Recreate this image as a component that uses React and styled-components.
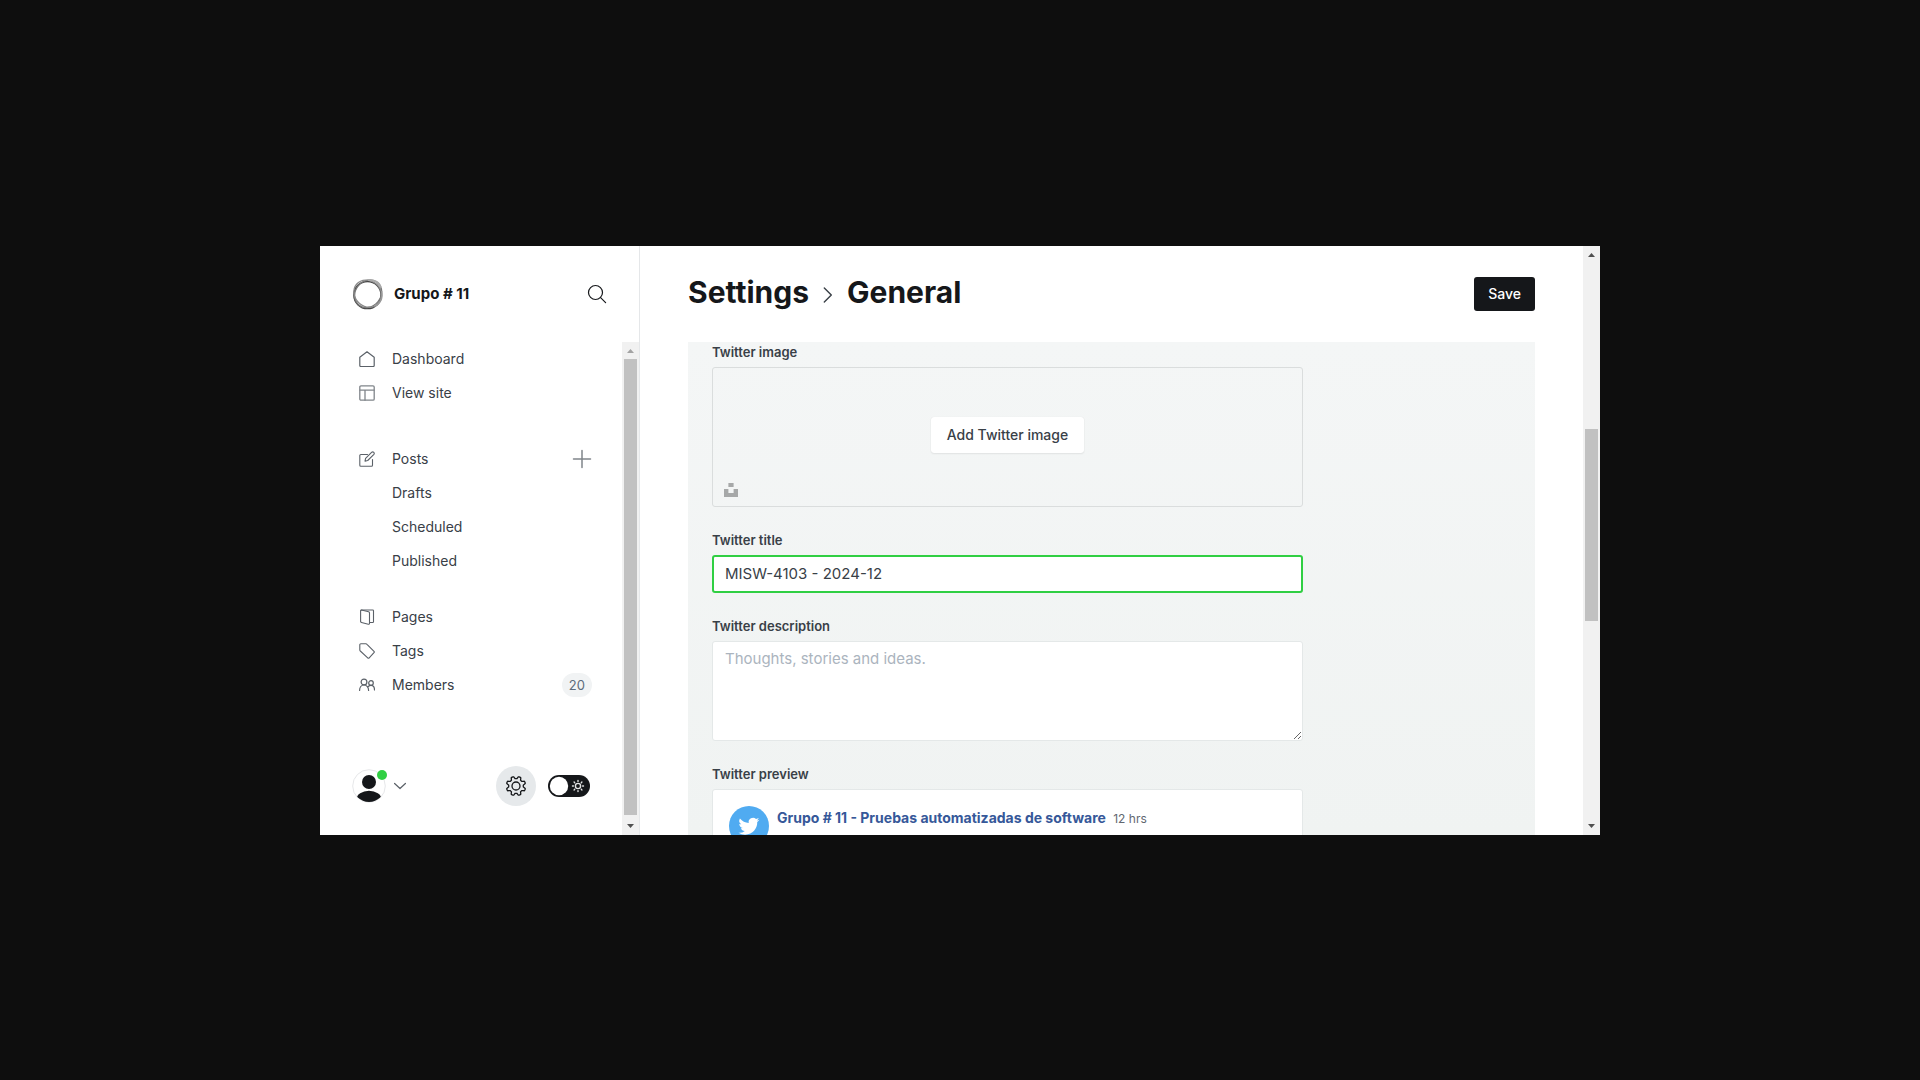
import React from "react";
import styled, { createGlobalStyle, css } from "styled-components";

const GlobalStyle = createGlobalStyle`
  *, *::before, *::after { box-sizing: border-box; }
  body {
    margin: 0;
    background: #0e0e0e;
    font-family: Inter, "Liberation Sans", sans-serif;
    color: #394047;
  }
  button, input, textarea { font: inherit; color: inherit; }
  a { color: inherit; text-decoration: none; }
`;

const Stage = styled.div`
  display: grid;
  grid-template-columns: 1fr 4fr 1fr;
  min-height: 100vh;
  padding: 246px 0 245px;
`;

const AppWindow = styled.div`
  grid-column: 2;
  display: flex;
  height: calc(100vh - 491px);
  min-height: 480px;
  overflow: hidden;
  background: #fff;
`;

const Sidebar = styled.aside`
  display: flex;
  flex-direction: column;
  flex: 0 0 320px;
  border-right: 1px solid #e5e7e9;
`;

const SiteHeader = styled.div`
  display: flex;
  align-items: center;
  gap: 10px;
  height: 96px;
  padding: 0 32px;
`;

const SiteName = styled.div`
  flex: 1;
  font-size: 15px;
  font-weight: 700;
  line-height: 20px;
  color: #15171a;
`;

const IconButton = styled.button`
  display: flex;
  align-items: center;
  justify-content: center;
  width: ${(p) => p.$size}px;
  height: ${(p) => p.$size}px;
  padding: 0;
  border: 0;
  border-radius: 50%;
  background: ${(p) => (p.$filled ? "#e6e9eb" : "transparent")};
  cursor: pointer;
`;

const SidebarBody = styled.div`
  display: flex;
  flex: 1;
  min-height: 0;
`;

const SidebarContent = styled.div`
  display: flex;
  flex: 1;
  flex-direction: column;
  justify-content: space-between;
  padding: 0 30px 29px 32px;
`;

const NavList = styled.ul`
  margin: 0 0 ${(p) => p.$gap}px;
  padding: 0;
  list-style: none;
`;

const NavRow = styled.li`
  display: flex;
  align-items: center;
  justify-content: space-between;
  height: 34px;
`;

const NavLink = styled.a`
  display: flex;
  flex: 1;
  align-items: center;
  gap: 17px;
  padding-left: ${(p) => (p.$nested ? 40 : 7)}px;
  font-size: 14px;
  line-height: 20px;
`;

const Count = styled.span`
  padding: 0 7px;
  border-radius: 12px;
  background: #f1f3f4;
  font-size: 13px;
  line-height: 24px;
  color: #5d6b7b;
`;

const SidebarFooter = styled.div`
  display: flex;
  align-items: center;
  justify-content: space-between;
  padding-right: 2px;
`;

const FooterGroup = styled.div`
  display: flex;
  align-items: center;
  gap: 12px;
`;

const UserButton = styled.button`
  display: flex;
  align-items: center;
  gap: 7px;
  padding: 0;
  border: 0;
  background: transparent;
  cursor: pointer;
`;

const ThemeSwitch = styled.label`
  position: relative;
  display: flex;
  width: 42px;
  height: 22px;

  input {
    appearance: none;
    width: 100%;
    height: 100%;
    margin: 0;
    border-radius: 11px;
    background: #15171a;
    cursor: pointer;
  }
  svg {
    position: absolute;
    inset: 0;
    pointer-events: none;
  }
`;

const Track = styled.div`
  display: flex;
  flex: 0 0 17px;
  flex-direction: column;
  align-items: center;
  background: #f1f1f1;
`;

const Thumb = styled.div`
  flex: ${(p) => p.$size} 0 0;
  width: 13px;
  background: #c1c1c1;
`;

const TrackGap = styled.div`
  flex: ${(p) => p.$size} 0 0;
`;

const TrackArrow = styled.svg`
  flex: 0 0 17px;
  width: 17px;
  height: 17px;
  fill: ${(p) => (p.$dim ? "#a3a3a3" : "#505050")};
`;

const Main = styled.main`
  display: flex;
  flex: 1;
  flex-direction: column;
  min-width: 0;
  padding: 0 48px;
`;

const MainHeader = styled.header`
  display: flex;
  flex: 0 0 96px;
  align-items: center;
  justify-content: space-between;
`;

const Title = styled.h1`
  display: flex;
  align-items: center;
  gap: 14px;
  margin: 0;
  padding-bottom: 4px;
  font-size: 30px;
  font-weight: 700;
  line-height: 40px;
  color: #15171a;

  svg { margin-top: 6px; }
`;

const buttonShape = css`
  border: 0;
  border-radius: 3px;
  font-size: 14px;
  font-weight: 500;
  line-height: 20px;
  cursor: pointer;
`;

const SaveButton = styled.button`
  ${buttonShape}
  padding: 7px 14px;
  background: #15171a;
  color: #fff;
`;

const Panel = styled.section`
  flex: 1;
  min-height: 0;
  overflow: hidden;
  padding: 1px 24px 0;
  background: linear-gradient(#f4f6f6, #f0f3f2);
`;

const Field = styled.div`
  display: flex;
  flex-direction: column;
  gap: 6px;
  max-width: 591px;
  margin-bottom: 24px;
`;

const labelText = css`
  font-size: 13px;
  font-weight: 600;
  line-height: 18px;
`;

const Label = styled.label`
  ${labelText}
`;

const LabelText = styled.div`
  ${labelText}
`;

const Uploader = styled.div`
  position: relative;
  display: flex;
  align-items: center;
  justify-content: center;
  height: 140px;
  padding-bottom: 4px;
  border: 1px solid #dadddd;
  border-radius: 3px;
`;

const UploadButton = styled.button`
  ${buttonShape}
  padding: 8px 16px;
  background: #fff;
  box-shadow: 0 0 1px rgba(0, 0, 0, 0.1), 0 1px 2px rgba(0, 0, 0, 0.07);
`;

const UnsplashButton = styled.button`
  position: absolute;
  bottom: 9px;
  left: 11px;
  display: flex;
  padding: 0;
  border: 0;
  background: transparent;
  cursor: pointer;
`;

const inputText = css`
  width: 100%;
  border-radius: 3px;
  background: #fff;
  font-size: 15px;
  line-height: 20px;
  outline: 0;
`;

const TextInput = styled.input`
  ${inputText}
  padding: 7px 11px;
  border: 2px solid #30cf43;
`;

const TextArea = styled.textarea`
  ${inputText}
  display: block;
  height: 100px;
  padding: 7px 12px;
  border: 1px solid #e4e8e8;
  resize: vertical;
  &::placeholder { color: #abb4be; opacity: 1; }
`;

const PreviewCard = styled.div`
  display: flex;
  gap: 8px;
  height: 160px;
  padding: 16px;
  border: 1px solid #e4e8e8;
  border-radius: 3px;
  background: #fff;
`;

const PreviewHeading = styled.div`
  font-size: 14px;
  font-weight: 700;
  line-height: 24px;
  color: #365899;

  span {
    margin-left: 4px;
    font-size: 12px;
    font-weight: 400;
    color: #616770;
  }
`;

function Stroke({ size = 16, width = 1, color = "#5b6168", children }) {
  return (
    <svg width={size} height={size} viewBox={`0 0 ${size} ${size}`} fill="none" stroke={color} strokeWidth={width} strokeLinecap="round" strokeLinejoin="round" aria-hidden="true">
      {children}
    </svg>
  );
}

const icons = {
  home: <Stroke width={1.2}><path d="M.8 6.2 8 .8l7.2 5.4v8.3a1 1 0 0 1-1 1H1.8a1 1 0 0 1-1-1z" /></Stroke>,
  layout: <Stroke color="#80858a" width={1.3}><rect x=".8" y=".8" width="14.4" height="14.4" rx="1.2" /><path d="M1 5.2h14M6 5.2v10" /></Stroke>,
  edit: <Stroke width={1.1}><path d="M8.5 3.5H1.8a1 1 0 0 0-1 1v9.7a1 1 0 0 0 1 1h10.7a1 1 0 0 0 1-1V8.5" /><path d="M6 10.2l.6-2.8L12.8 1.2a1.5 1.5 0 0 1 2.1 2.1L8.7 9.5z" /></Stroke>,
  pages: <Stroke width={1.1}><path d="M2.4 1 9.6 2.8a1.2 1.2 0 0 1 .9 1.1v10.4a.9.9 0 0 1-1.2.9L2.5 13.500a1.2 1.2 0 0 1-.9-1.1V1.8a.8.8 0 0 1 .8-.8z" /><path d="M2.4 1h11.300a.8.8 0 0 1 .8.8v10.900a.8.8 0 0 1-.8.8h-3.200" /></Stroke>,
  tag: <Stroke width={1.1}><path d="M.8 1.8a1 1 0 0 1 1-1h5.1a1.6 1.6 0 0 1 1.1.5l7 7a1 1 0 0 1 0 1.4l-4.8 5.2a1 1 0 0 1-1.5 0L1.3 8a1.6 1.6 0 0 1-.5-1.1z" /></Stroke>,
  members: <Stroke width={1.2}><circle cx="5" cy="5" r="2.9" /><circle cx="12" cy="6" r="2.3" /><path d="M.6 13.5c0-2.8 1.6-5.5 4.4-5.5s4.6 2.7 4.6 5.5M9.3 9.5c.7-.8 1.6-1.2 2.7-1.2 2.2 0 3.5 1.9 3.5 4.7" /></Stroke>,
};

function Logo() {
  return (
    <svg width="32" height="32" viewBox="0 0 32 32" fill="none" aria-hidden="true">
      <circle cx="15.5" cy="17" r="13.6" stroke="#444" strokeWidth="1.5" />
      <ellipse cx="16.3" cy="15.9" rx="14.6" ry="12.7" stroke="#777" strokeWidth="1.3" transform="rotate(-50 16 16)" />
      <ellipse cx="15.6" cy="15.9" rx="14.6" ry="12.8" stroke="#8a8a8a" strokeWidth="1.3" transform="rotate(40 16 16)" />
      <path d="M16 1.900c6-.3 11.500 2.500 12.700 7.600" stroke="#aaa" strokeWidth="2" />
      <path d="M29.500 13c1.200 6-.8 12-6.500 15" stroke="#999" strokeWidth="1.6" />
    </svg>
  );
}

function Avatar() {
  return (
    <svg width="35" height="36" viewBox="0 0 35 36" aria-hidden="true">
      <defs>
        <clipPath id="avatar-clip"><circle cx="17" cy="18" r="16" /></clipPath>
      </defs>
      <circle cx="17" cy="18" r="16.3" fill="#fff" stroke="#e6e7e9" strokeWidth="1" />
      <g fill="#15171a" clipPath="url(#avatar-clip)">
        <circle cx="17" cy="14" r="7" />
        <ellipse cx="17" cy="31.5" rx="12.5" ry="8.8" />
      </g>
      <circle cx="30" cy="7" r="5" fill="#30cf43" />
    </svg>
  );
}

function Gear() {
  const points = [];
  for (let i = 0; i < 96; i += 1) {
    const a = (i / 96) * Math.PI * 2;
    const wave = Math.max(-1, Math.min(1, 1.7 * Math.cos(8 * a + Math.PI)));
    const r = 8.5 + 1.2 * wave;
    points.push(`${(11 + r * Math.cos(a)).toFixed(2)} ${(11 + r * Math.sin(a)).toFixed(2)}`);
  }
  return (
    <Stroke size={22} width={1.3} color="#15171a">
      <path d={`M${points.join("L")}Z`} />
      <circle cx="11" cy="11" r="4" />
    </Stroke>
  );
}

function SwitchFace() {
  return (
    <svg width="42" height="22" viewBox="0 0 42 22" aria-hidden="true">
      <circle cx="11" cy="11" r="9.2" fill="#fff" />
      <g fill="none" stroke="#e3e4e5" strokeWidth="1.4" strokeLinecap="round">
        <circle cx="30" cy="11" r="2.6" />
        <path d="M30 5.500v.9M30 15.600v.9M24.500 11h.9M34.600 11h.9M26.100 7.100l.6.6M33.300 14.300l.6.6M33.900 7.100l-.6.6M26.700 14.300l-.6.6" />
      </g>
    </svg>
  );
}

function TwitterMark() {
  return (
    <svg width="40" height="40" viewBox="0 0 40 40" aria-hidden="true">
      <circle cx="20" cy="20" r="20" fill="#50abf1" />
      <path transform="translate(9.500 9.800) scale(.87)" fill="#fff" d="M23.950 4.570a10 10 0 0 1-2.820.77 4.960 4.960 0 0 0 2.160-2.720c-.95.55-2 .96-3.130 1.180a4.920 4.920 0 0 0-8.380 4.480A13.980 13.980 0 0 1 1.640 3.160a4.920 4.920 0 0 0 1.520 6.570 4.900 4.900 0 0 1-2.230-.61v.06a4.920 4.920 0 0 0 3.950 4.830 5 5 0 0 1-2.210.08 4.940 4.940 0 0 0 4.600 3.420A9.870 9.870 0 0 1 0 19.540a13.990 13.990 0 0 0 7.550 2.210c9.050 0 14-7.500 14-13.980 0-.21 0-.42-.02-.63a9.940 9.940 0 0 0 2.460-2.550z" />
    </svg>
  );
}

function Crumb() {
  return (
    <svg width="10" height="16" viewBox="0 0 10 16" fill="none" stroke="#394047" strokeWidth="1.4" strokeLinecap="round" strokeLinejoin="round" aria-hidden="true">
      <path d="m1.300 1 7 7-7 7" />
    </svg>
  );
}

function Scrollbar({ before, size, after, dimTop }) {
  return (
    <Track aria-hidden="true">
      <TrackArrow viewBox="0 0 17 17" $dim={dimTop}><path d="M5 11 8.500 7 12 11z" /></TrackArrow>
      <TrackGap $size={before} />
      <Thumb $size={size} />
      <TrackGap $size={after} />
      <TrackArrow viewBox="0 0 17 17"><path d="M5 6 8.500 10 12 6z" /></TrackArrow>
    </Track>
  );
}

function NavItem({ icon, nested, label, children }) {
  return (
    <NavRow>
      <NavLink href="#" $nested={nested}>{icon && icons[icon]}{label}</NavLink>
      {children}
    </NavRow>
  );
}

export default function App() {
  return (
    <>
      <GlobalStyle />
      <Stage>
        <AppWindow>
          <Sidebar>
            <SiteHeader>
              <Logo />
              <SiteName>Grupo # 11</SiteName>
              <IconButton $size={20} aria-label="Search">
                <Stroke size={20} width={1.2} color="#15171a"><circle cx="8.5" cy="8.5" r="7" /><path d="m13.600 13.600 5 5" /></Stroke>
              </IconButton>
            </SiteHeader>
            <SidebarBody>
              <SidebarContent>
                <nav>
                  <NavList $gap={32}>
                    <NavItem icon="home" label="Dashboard" />
                    <NavItem icon="layout" label="View site" />
                  </NavList>
                  <NavList $gap={22}>
                    <NavItem icon="edit" label="Posts">
                      <IconButton $size={20} aria-label="New post">
                        <Stroke size={20} color="#80858a" width={1.5}><path d="M10 1.500v17M1.500 10h17" /></Stroke>
                      </IconButton>
                    </NavItem>
                    <NavItem nested label="Drafts" />
                    <NavItem nested label="Scheduled" />
                    <NavItem nested label="Published" />
                  </NavList>
                  <NavList $gap={0}>
                    <NavItem icon="pages" label="Pages" />
                    <NavItem icon="tag" label="Tags" />
                    <NavItem icon="members" label="Members"><Count>20</Count></NavItem>
                  </NavList>
                </nav>
                <SidebarFooter>
                  <UserButton aria-label="User menu">
                    <Avatar />
                    <Stroke size={12} width={1.2}><path d="m.6 3.500 5.400 5 5.400-5" /></Stroke>
                  </UserButton>
                  <FooterGroup>
                    <IconButton $size={40} $filled aria-label="Settings"><Gear /></IconButton>
                    <ThemeSwitch>
                      <input type="checkbox" aria-label="Night mode" />
                      <SwitchFace />
                    </ThemeSwitch>
                  </FooterGroup>
                </SidebarFooter>
              </SidebarContent>
              <Scrollbar before={0} size={456} after={3} dimTop />
            </SidebarBody>
          </Sidebar>

          <Main>
            <MainHeader>
              <Title>
                <a href="#">Settings</a>
                <Crumb />
                General
              </Title>
              <SaveButton>Save</SaveButton>
            </MainHeader>
            <Panel>
              <Field>
                <LabelText>Twitter image</LabelText>
                <Uploader>
                  <UploadButton>Add Twitter image</UploadButton>
                  <UnsplashButton aria-label="Unsplash">
                    <svg width="14" height="14" viewBox="0 0 14 14" fill="#a6a8a8" aria-hidden="true"><path d="M4.400 0h5.200v4H4.400zM0 6h4.400v4h5.200V6H14v8H0z" /></svg>
                  </UnsplashButton>
                </Uploader>
              </Field>
              <Field>
                <Label htmlFor="twitter-title">Twitter title</Label>
                <TextInput id="twitter-title" defaultValue="MISW-4103 - 2024-12" />
              </Field>
              <Field>
                <Label htmlFor="twitter-description">Twitter description</Label>
                <TextArea id="twitter-description" placeholder="Thoughts, stories and ideas." />
              </Field>
              <Field>
                <LabelText>Twitter preview</LabelText>
                <PreviewCard>
                  <TwitterMark />
                  <PreviewHeading>Grupo # 11 - Pruebas automatizadas de software <span>12 hrs</span></PreviewHeading>
                </PreviewCard>
              </Field>
            </Panel>
          </Main>
          <Scrollbar before={166} size={192} after={197} />
        </AppWindow>
      </Stage>
    </>
  );
}
